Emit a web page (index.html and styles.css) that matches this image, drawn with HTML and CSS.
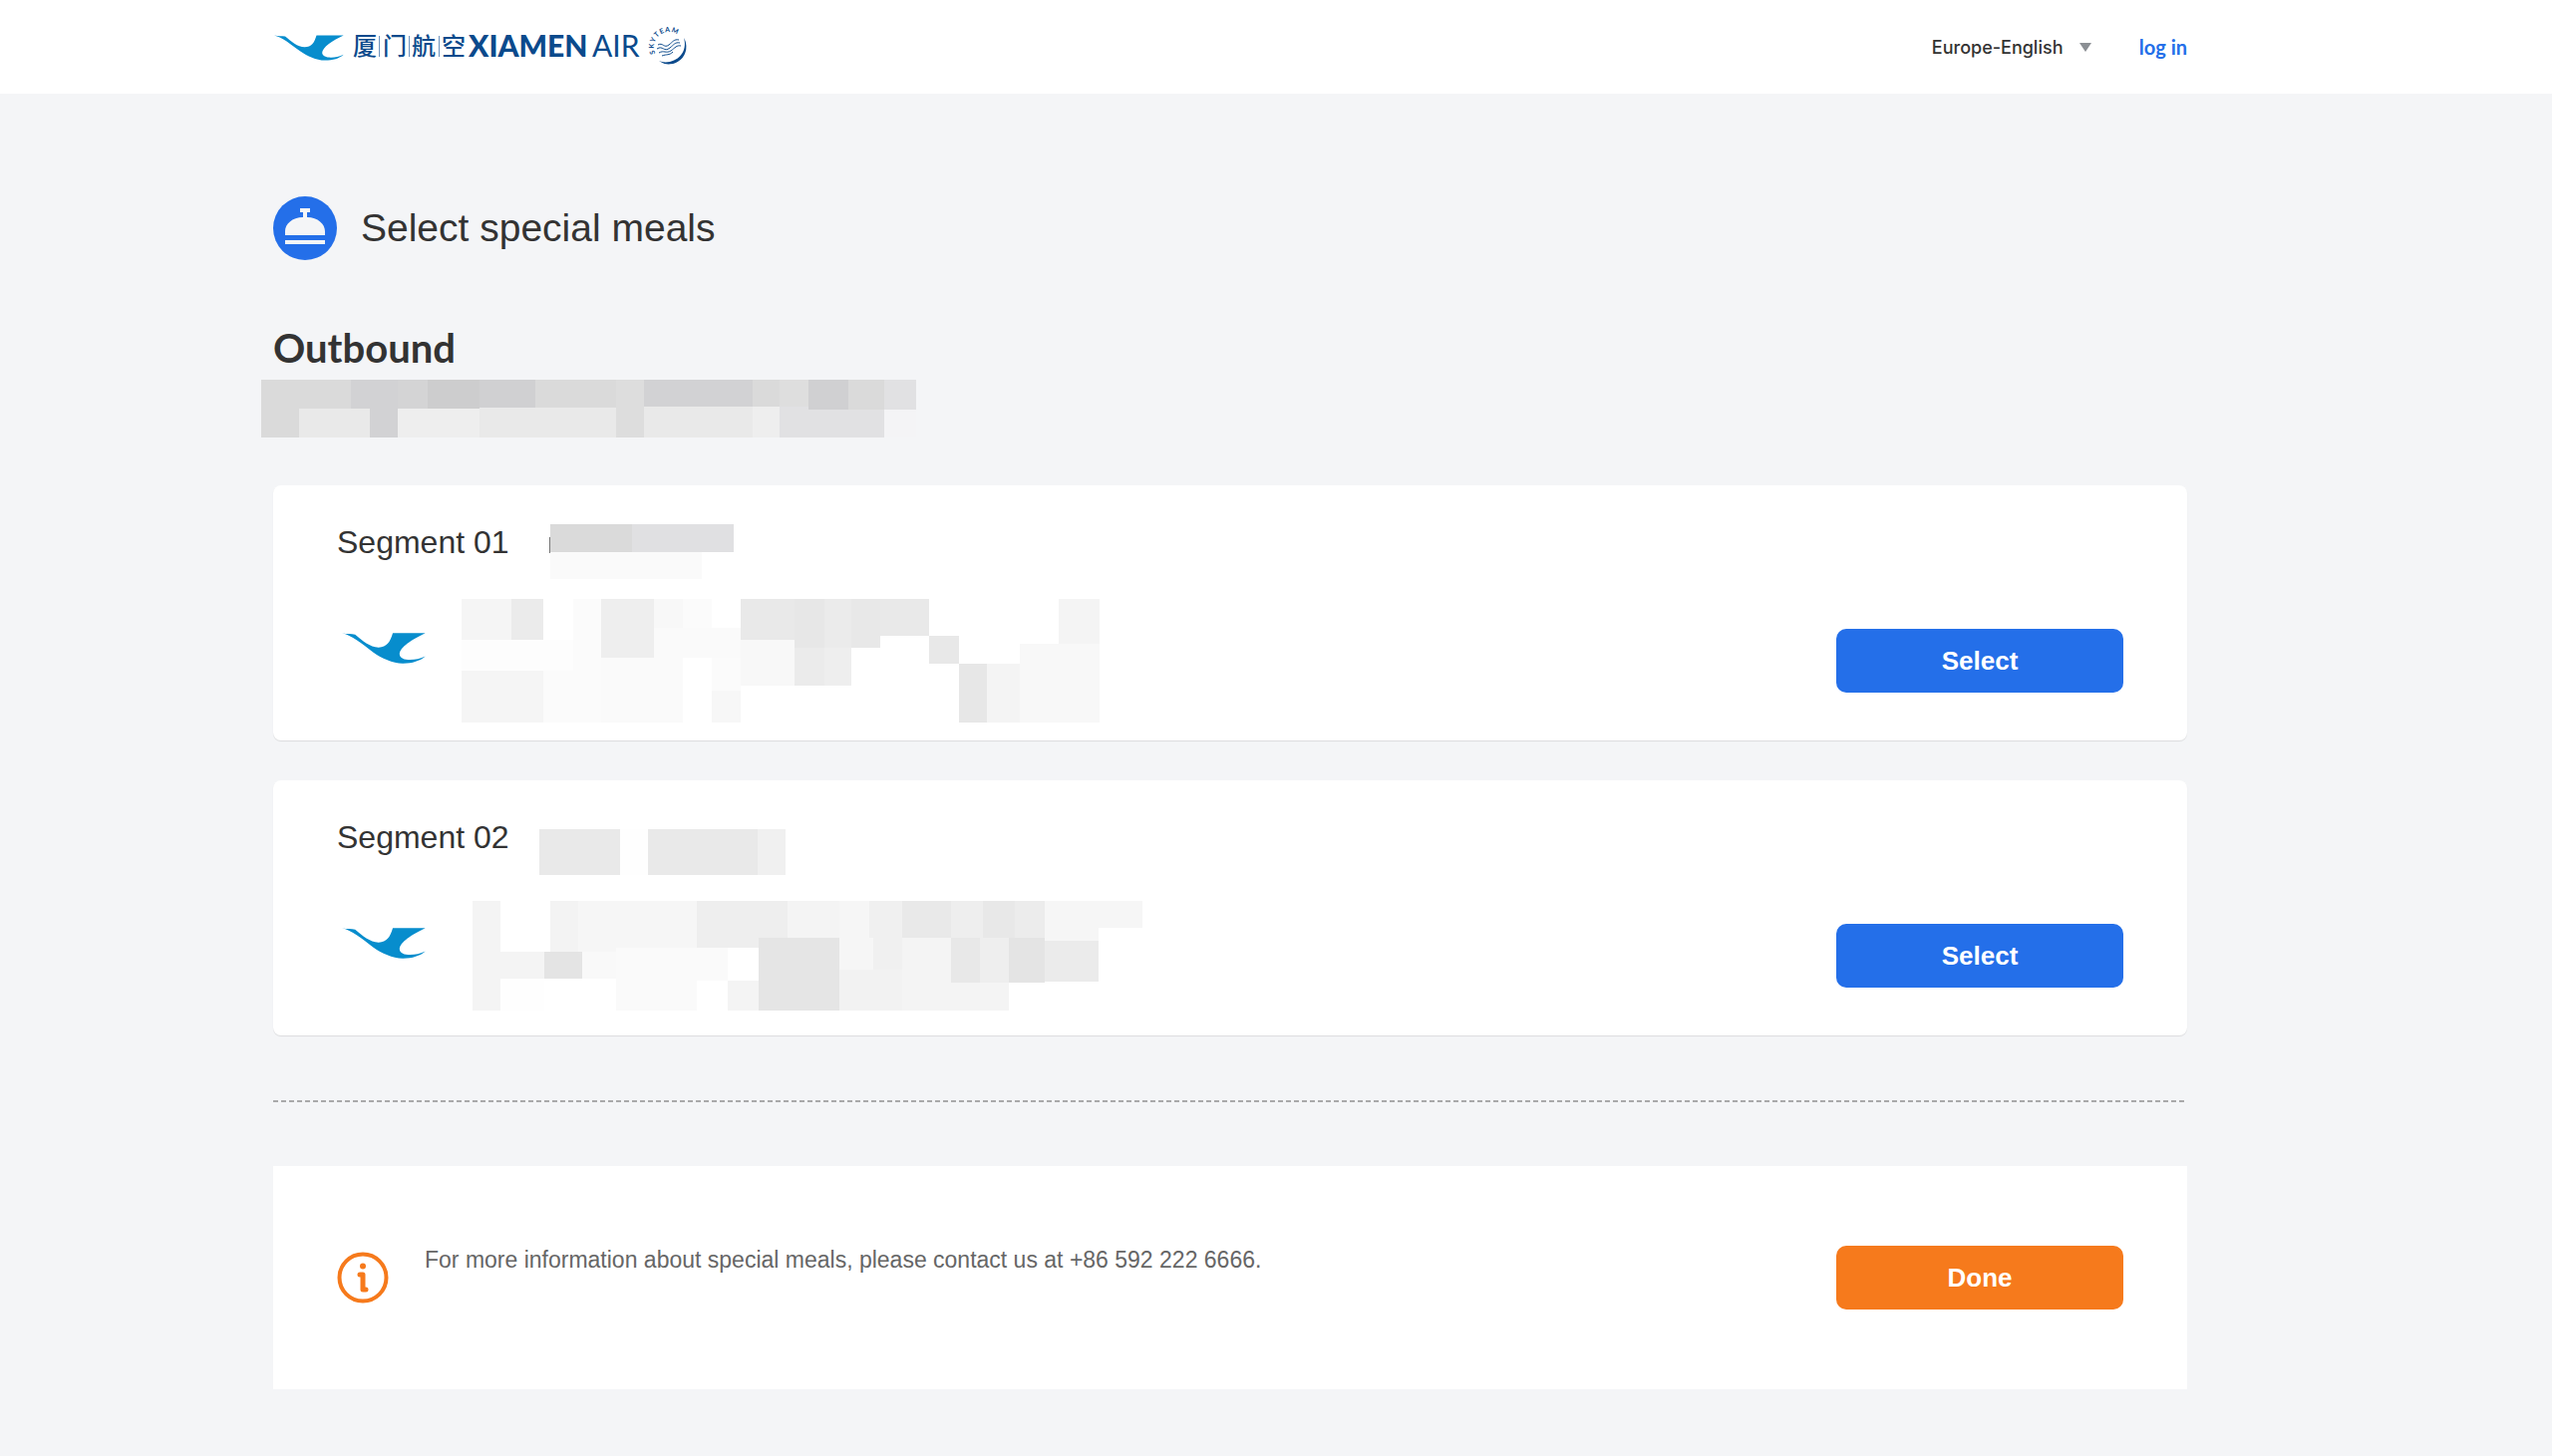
FILE: index.html
```html
<!DOCTYPE html>
<html lang="en">
<head>
    <meta charset="UTF-8">
    <meta name="viewport" content="width=device-width, initial-scale=1.0">
    <title>Select special meals - XiamenAir</title>
    <link rel="stylesheet" href="styles.css">
</head>
<body>
    <svg class="symbols" aria-hidden="true">
        <symbol id="egret" viewBox="252 465 247 91">
            <path d="M252 466C268 470 280 467 291 470C312 487 335 508 360 508C385 506 393 495 402 466H498C460 484 422 508 422 528C424 550 470 548 498 534C482 548 460 555 432 555C400 555 370 540 345 523C312 498 280 472 252 466Z"/>
        </symbol>
    </svg>

    <header class="header">
        <a class="logo" href="#" aria-label="XiamenAir">
            <svg width="416" height="40" viewBox="0 0 416 40">
                <use class="egret" href="#egret" x="1" y="8" width="70" height="26"/>
                <g class="logo-cn">
                    <text x="80" y="28">厦</text>
                    <text x="110" y="28">门</text>
                    <text x="139" y="28">航</text>
                    <text x="169" y="28">空</text>
                </g>
                <path class="logo-line" d="M106.500 9V30M136.500 9V30M166.500 9V30"/>
                <text class="logo-bold" x="196" y="30">XIAMEN</text>
                <text class="logo-light" x="320" y="30">AIR</text>
                <path id="team-arc" fill="none" d="M383.500 26.500A15 15 0 1 1 412 20"/>
                <text class="logo-team"><textPath href="#team-arc">SKYTEAM</textPath></text>
                <path class="team-ring" d="M412 11A17.500 17.500 0 0 1 387 34.300C401 39 417 28 412 11Z"/>
                <path class="team-wave" d="M386 18C391 15 392 22 397 18C401 15 402 12 407 13M385 22C391 18 392 26 398 21C402 18 403 15 408 16M387 26C392 23 394 27 399 24C403 21 405 18 409 19M390 29C395 27 397 29 401 25"/>
            </svg>
        </a>
        <div class="header-nav">
            <select class="lang" aria-label="Language">
                <option>Europe-English</option>
            </select>
            <a class="login" href="#">log in</a>
        </div>
    </header>

    <main class="main">
        <div class="page-title">
            <svg width="64" height="64" viewBox="0 0 64 64" aria-hidden="true">
                <circle cx="32" cy="32" r="32" fill="#246fe9"/>
                <path fill="#f4f5f7" d="M27 12H37V16H34V21C45 21 52 28 52 35V39H12V35C12 28 19 21 30 21V16H27ZM12 44H52V48H12Z"/>
            </svg>
            <h1>Select special meals</h1>
        </div>

        <h2 class="trip">Outbound</h2>
        <svg class="mask trip-mask" width="657" height="58" aria-hidden="true">
            <rect width="657" height="58" fill="#dadada"/>
            <rect x="90" width="47" height="29" fill="#d2d2d4"/>
            <rect x="109" y="29" width="28" height="29" fill="#d2d2d4"/>
            <rect x="137" width="30" height="29" fill="#d4d4d5"/>
            <rect x="167" width="52" height="29" fill="#cdcdce"/>
            <rect x="219" width="56" height="29" fill="#d0d0d2"/>
            <rect x="38" y="29" width="71" height="29" fill="#e9e9e9"/>
            <rect x="137" y="29" width="82" height="29" fill="#eeeeee"/>
            <rect x="219" y="28" width="137" height="30" fill="#e9e9e9"/>
            <rect x="356" width="28" height="58" fill="#dddddd"/>
            <rect x="384" width="109" height="28" fill="#d2d2d4"/>
            <rect x="384" y="27" width="109" height="31" fill="#e9e9e9"/>
            <rect x="493" y="27" width="27" height="31" fill="#eeeeee"/>
            <rect x="520" width="29" height="27" fill="#dedede"/>
            <rect x="520" y="27" width="105" height="31" fill="#e1e1e3"/>
            <rect x="549" width="40" height="30" fill="#d0d0d2"/>
            <rect x="589" width="36" height="30" fill="#dadada"/>
            <rect x="625" width="32" height="30" fill="#e1e1e3"/>
            <rect x="625" y="30" width="32" height="28" fill="#f4f4f6"/>
        </svg>

        <div class="segments">
            <section class="segment">
                <div class="segment-head">
                    <h3>Segment 01</h3>
                    <svg class="mask" width="264" height="64" aria-hidden="true">
                        <rect x="21" y="16" width="1" height="16" fill="#777777"/>
                        <rect x="22" y="3" width="82" height="28" fill="#dadada"/>
                        <rect x="104" y="3" width="102" height="28" fill="#e0e0e2"/>
                        <rect x="22" y="31" width="152" height="27" fill="#fafafa"/>
                    </svg>
                </div>
                <div class="segment-body">
                    <div class="carrier"><svg class="egret" width="84" height="31" aria-hidden="true"><use href="#egret"/></svg></div>
                    <svg class="mask" width="720" height="144" aria-hidden="true">
                        <rect x="29" y="10" width="50" height="41" fill="#f5f5f5"/>
                        <rect x="79" y="10" width="32" height="41" fill="#ebebeb"/>
                        <rect x="29" y="51" width="112" height="31" fill="#fdfdfd"/>
                        <rect x="29" y="82" width="82" height="52" fill="#f5f5f5"/>
                        <rect x="111" y="82" width="58" height="52" fill="#fbfbfb"/>
                        <rect x="141" y="10" width="28" height="72" fill="#fbfbfb"/>
                        <rect x="169" y="10" width="53" height="59" fill="#eeeeee"/>
                        <rect x="169" y="69" width="82" height="65" fill="#fafafa"/>
                        <rect x="222" y="10" width="29" height="29" fill="#f8f8f8"/>
                        <rect x="222" y="39" width="87" height="30" fill="#fafafa"/>
                        <rect x="251" y="10" width="29" height="29" fill="#fbfbfb"/>
                        <rect x="280" y="69" width="29" height="33" fill="#fbfbfb"/>
                        <rect x="280" y="102" width="29" height="32" fill="#f7f7f7"/>
                        <rect x="309" y="10" width="54" height="41" fill="#e9e9e9"/>
                        <rect x="309" y="51" width="54" height="46" fill="#f8f8f8"/>
                        <rect x="363" y="10" width="30" height="49" fill="#e7e7e7"/>
                        <rect x="393" y="10" width="27" height="49" fill="#ebebeb"/>
                        <rect x="363" y="59" width="30" height="38" fill="#ebebeb"/>
                        <rect x="393" y="59" width="27" height="38" fill="#eeeeee"/>
                        <rect x="420" y="10" width="29" height="49" fill="#e8e8e8"/>
                        <rect x="449" y="10" width="49" height="37" fill="#e9e9e9"/>
                        <rect x="498" y="47" width="30" height="28" fill="#e8e8e8"/>
                        <rect x="528" y="75" width="28" height="59" fill="#e7e7e7"/>
                        <rect x="556" y="75" width="33" height="59" fill="#f4f4f4"/>
                        <rect x="589" y="55" width="80" height="79" fill="#f8f8f8"/>
                        <rect x="628" y="10" width="41" height="45" fill="#f4f4f4"/>
                    </svg>
                    <button class="btn" type="button">Select</button>
                </div>
            </section>

            <section class="segment">
                <div class="segment-head">
                    <h3>Segment 02</h3>
                    <svg class="mask" width="264" height="64" aria-hidden="true">
                        <rect x="11" y="13" width="81" height="46" fill="#e9e9e9"/>
                        <rect x="92" y="13" width="28" height="46" fill="#fefefe"/>
                        <rect x="120" y="13" width="110" height="46" fill="#e9e9e9"/>
                        <rect x="230" y="13" width="28" height="46" fill="#f0f0f0"/>
                    </svg>
                </div>
                <div class="segment-body">
                    <div class="carrier"><svg class="egret" width="84" height="31" aria-hidden="true"><use href="#egret"/></svg></div>
                    <svg class="mask" width="720" height="144" aria-hidden="true">
                        <rect x="40" y="17" width="28" height="110" fill="#f4f4f4"/>
                        <rect x="68" y="68" width="44" height="27" fill="#f4f4f4"/>
                        <rect x="68" y="95" width="44" height="32" fill="#fefefe"/>
                        <rect x="118" y="17" width="28" height="51" fill="#f3f3f3"/>
                        <rect x="146" y="17" width="119" height="51" fill="#f6f6f6"/>
                        <rect x="150" y="68" width="34" height="27" fill="#f9f9f9"/>
                        <rect x="184" y="64" width="112" height="33" fill="#fafafa"/>
                        <rect x="184" y="95" width="81" height="32" fill="#fafafa"/>
                        <rect x="112" y="68" width="38" height="27" fill="#e4e4e4"/>
                        <rect x="265" y="17" width="91" height="47" fill="#eeeeee"/>
                        <rect x="296" y="97" width="31" height="30" fill="#f4f4f4"/>
                        <rect x="356" y="17" width="52" height="37" fill="#f4f4f4"/>
                        <rect x="327" y="54" width="81" height="73" fill="#e5e5e5"/>
                        <rect x="408" y="17" width="34" height="69" fill="#f6f6f6"/>
                        <rect x="438" y="17" width="33" height="37" fill="#f0f0f0"/>
                        <rect x="442" y="54" width="29" height="32" fill="#f0f0f0"/>
                        <rect x="408" y="86" width="63" height="41" fill="#f2f2f2"/>
                        <rect x="471" y="17" width="49" height="37" fill="#e9e9e9"/>
                        <rect x="471" y="54" width="107" height="73" fill="#f4f4f4"/>
                        <rect x="520" y="17" width="32" height="37" fill="#eeeeee"/>
                        <rect x="552" y="17" width="32" height="37" fill="#e8e8e8"/>
                        <rect x="584" y="17" width="30" height="37" fill="#ececec"/>
                        <rect x="520" y="54" width="29" height="45" fill="#e8e8e8"/>
                        <rect x="549" y="54" width="29" height="45" fill="#eeeeee"/>
                        <rect x="578" y="54" width="36" height="45" fill="#e4e4e4"/>
                        <rect x="614" y="17" width="54" height="40" fill="#f6f6f6"/>
                        <rect x="668" y="17" width="44" height="27" fill="#f6f6f6"/>
                        <rect x="614" y="57" width="54" height="41" fill="#ebebeb"/>
                    </svg>
                    <button class="btn" type="button">Select</button>
                </div>
            </section>
        </div>

        <hr class="divider">

        <section class="info">
            <svg width="52" height="52" viewBox="0 0 52 52" aria-hidden="true" fill="none" stroke="#f67a1c" stroke-width="4">
                <circle cx="26" cy="26" r="23.500"/>
                <circle cx="26" cy="14.500" r="3" fill="#f67a1c" stroke="none"/>
                <path stroke-width="5" stroke-linecap="round" stroke-linejoin="round" d="M23 23H26V38H29"/>
            </svg>
            <p>For more information about special meals, please contact us at +86 592 222 6666.</p>
            <button class="btn btn-done" type="button">Done</button>
        </section>
    </main>
</body>
</html>
```

FILE: styles.css
```css
* {
    box-sizing: border-box;
}
body {
    margin: 0;
    font-family: "Liberation Sans", Arial, sans-serif;
    background: #f4f5f7;
    color: #333;
}
h1, h2, h3, p {
    margin: 0;
}
svg {
    display: block;
    flex-shrink: 0;
}
.symbols {
    position: absolute;
    width: 0;
    height: 0;
}
.egret {
    fill: #078dcd;
}

/* header */
.header {
    display: flex;
    align-items: center;
    justify-content: space-between;
    height: 94px;
    padding: 0 366px 0 274px;
    background: #fff;
}
.logo svg {
    overflow: visible;
}
.logo-cn {
    font-family: "Noto Sans CJK SC", sans-serif;
    font-size: 24px;
    font-weight: 500;
    fill: #0b4a8c;
}
.logo-line {
    stroke: #6d93bd;
    stroke-width: 1;
}
.logo-bold, .logo-light {
    font-family: Lato, sans-serif;
    font-size: 30px;
    font-weight: 900;
    fill: #0b4a8c;
}
.logo-light {
    font-weight: 400;
}
.logo-team {
    font-family: Lato, sans-serif;
    font-size: 7px;
    font-weight: 700;
    letter-spacing: 1px;
    fill: #0b4a8c;
}
.team-ring {
    fill: #0b4a8c;
}
.team-wave {
    fill: none;
    stroke: #0b4a8c;
    stroke-width: 1;
}
.header-nav {
    display: flex;
    align-items: center;
}
.lang {
    appearance: none;
    width: 160px;
    margin-right: 48px;
    padding: 0;
    border: none;
    background: url("data:image/svg+xml,%3Csvg xmlns='http://www.w3.org/2000/svg' width='12' height='9'%3E%3Cpath fill='%238b8f94' d='M0 0h12L6 9z'/%3E%3C/svg%3E") no-repeat right center;
    font-family: Inter, sans-serif;
    font-size: 18px;
    font-weight: 500;
    color: #333;
}
.login {
    font-family: Lato, sans-serif;
    font-size: 20px;
    font-weight: 700;
    color: #246fe9;
    text-decoration: none;
}

/* content */
.main {
    padding: 103px 366px 67px 274px;
}
.page-title {
    display: flex;
    align-items: center;
    gap: 24px;
}
.page-title h1 {
    font-size: 39px;
    font-weight: 400;
}
.trip {
    margin: 64px 0 8px;
    font-family: Lato, sans-serif;
    font-size: 40px;
    font-weight: 700;
    line-height: 48px;
}
.mask {
    shape-rendering: crispEdges;
}
.trip-mask {
    margin-left: -12px;
}
.segments {
    display: flex;
    flex-direction: column;
    gap: 40px;
    margin-top: 48px;
}
.segment {
    padding: 36px 64px 8px;
    background: #fff;
    border-radius: 8px;
    box-shadow: 0 1px 1px rgba(0, 0, 0, 0.1);
}
.segment-head {
    display: flex;
    margin-bottom: 4px;
}
.segment-head h3 {
    min-width: 192px;
    font-size: 32px;
    font-weight: 400;
    line-height: 42px;
}
.segment-body {
    display: flex;
    align-items: center;
}
.carrier {
    width: 96px;
    padding: 0 0 26px 5px;
}
.btn {
    width: 288px;
    height: 64px;
    margin-left: auto;
    border: none;
    border-radius: 10px;
    background: #246fe9;
    color: #fff;
    font-family: inherit;
    font-size: 26px;
    font-weight: 700;
    cursor: pointer;
}
.btn-done {
    background: #f67a1c;
}
.divider {
    height: 2px;
    margin: 65px 0 64px;
    border: none;
    background: repeating-linear-gradient(90deg, #a9a9aa 0 5px, transparent 5px 8px);
}
.info {
    display: flex;
    align-items: center;
    padding: 80px 64px;
    background: #fff;
}
.info p {
    padding: 0 36px 36px;
    font-size: 23px;
    line-height: 28px;
    color: #666;
}
```
